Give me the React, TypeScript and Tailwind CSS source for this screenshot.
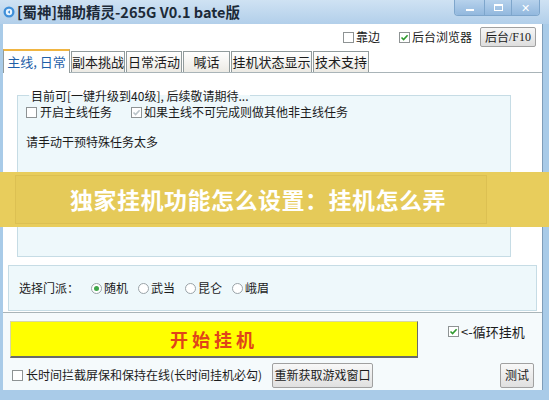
import React from 'react';

function Check({ checked, dim }: { checked?: boolean; dim?: boolean }) {
  return (
    <span className="w-[11px] h-[11px] shrink-0 border border-[#8e9394] bg-white flex items-center justify-center">
      {checked && (
        <svg width="9" height="9" viewBox="0 0 9 9" fill="none">
          <path d="M1.5 4.5L3.6 6.6L7.6 2.2" stroke={dim ? '#b9c3c8' : '#2f9a2f'} strokeWidth="1.6" />
        </svg>
      )}
    </span>
  );
}

function Radio({ on }: { on?: boolean }) {
  return (
    <span className="w-[11px] h-[11px] shrink-0 rounded-full border border-[#9aa3a8] bg-white flex items-center justify-center">
      {on && <span className="w-[5px] h-[5px] rounded-full bg-[#3fa64a]" />}
    </span>
  );
}

const tabs = [
  { label: '主线, 日常', w: 'w-[67px]', active: true },
  { label: '副本挑战', w: 'w-[54px]' },
  { label: '日常活动', w: 'w-[56px]' },
  { label: '喊话', w: 'w-[47px]' },
  { label: '挂机状态显示', w: 'w-[81px]' },
  { label: '技术支持', w: 'w-[56px]' },
];

export default function App() {
  return (
    <div className="w-[549px] h-[400px] relative overflow-hidden flex flex-col bg-[#a9cbe8] text-[#1b1b1b] font-['Noto_Sans_CJK_SC','DejaVu_Sans',sans-serif]">
      {/* Title bar */}
      <div className="h-[24px] flex items-start bg-gradient-to-b from-[#cfe2f3] to-[#b2cfea]">
        <div className="flex items-center h-[24px] pl-[3px] gap-[2px]">
          <svg width="12" height="12" viewBox="0 0 12 12">
            <circle cx="6" cy="6" r="5.5" fill="#3f8fd8" />
            <circle cx="6" cy="6" r="3.2" fill="#e9f4ff" />
            <path d="M4.6 6L7 4.2V7.8Z" fill="#3f8fd8" />
          </svg>
          <span className="text-[14.5px] font-bold text-[#1c2a38]">[蜀神]辅助精灵-265G V0.1 bate版</span>
        </div>
        <div className="ml-auto mr-[9px] flex h-[16px] rounded-b-[4px] overflow-hidden border border-t-0 border-[#7ea6cc]">
          <div className="w-[30px] flex items-center justify-center bg-gradient-to-b from-[#b7d2ec] to-[#92b8de] border-r border-[#7ea6cc]">
            <span className="w-[8px] h-[2px] bg-white mt-[5px]" />
          </div>
          <div className="w-[27px] flex items-center justify-center bg-gradient-to-b from-[#b7d2ec] to-[#92b8de] border-r border-[#7ea6cc]">
            <span className="w-[9px] h-[7px] border border-white border-t-2" />
          </div>
          <div className="w-[27px] flex items-center justify-center bg-gradient-to-b from-[#b7d2ec] to-[#92b8de] text-white text-[11px] font-bold leading-none">
            ✕
          </div>
        </div>
      </div>

      {/* Client area */}
      <div className="flex-1 ml-[3px] mr-[6px] mb-[10px] bg-white flex flex-col border-r border-[#7f9db9]">
        {/* Top row */}
        <div className="h-[26px] flex items-center justify-end pr-[6px] text-[12px]">
          <Check />
          <span className="ml-[2px]">靠边</span>
          <span className="ml-[19px]"><Check checked /></span>
          <span className="ml-[2px]">后台浏览器</span>
          <button className="ml-[8px] w-[56px] h-[20px] border border-[#a0a0a0] rounded-[2px] bg-gradient-to-b from-[#f6f6f6] to-[#dedede] text-[12px] flex items-center justify-center">
            后台<span className="font-['Liberation_Serif',serif] text-[12px]">/F10</span>
          </button>
        </div>

        {/* Tabs */}
        <div className="h-[22px] flex items-end gap-[1px]">
          {tabs.map(t => (
            <div
              key={t.label}
              className={`${t.w} flex items-center justify-center text-[13px] border border-b-0 ${
                t.active
                  ? 'h-[24px] bg-white border-[#919b9c] border-t-2 border-t-[#f0b542] text-[#1f5fa8] relative -mb-px z-10'
                  : 'h-[21px] bg-gradient-to-b from-white to-[#eceae4] border-[#919b9c]'
              }`}
            >
              {t.label}
            </div>
          ))}
        </div>

        {/* Tab panel */}
        <div className="h-[241px] border-t border-b border-[#a9b4b8] flex flex-col text-[12px]">
          <fieldset className="ml-[14px] mt-[15px] w-[494px] h-[169px] border border-[#c6dce5] bg-[#eef8fb] px-[8px]">
            <legend className="ml-[3px] px-[2px] text-[12px] leading-[15px]">目前可[一键升级到40级], 后续敬请期待...</legend>
            <div className="flex items-center mt-[2px] h-[14px]">
              <Check />
              <span className="ml-[3px]">开启主线任务</span>
              <span className="ml-[19px]"><Check checked dim /></span>
              <span className="ml-[2px]">如果主线不可完成则做其他非主线任务</span>
            </div>
            <div className="mt-[15px] leading-[16px]">请手动干预特殊任务太多</div>
          </fieldset>
          <div className="mx-[5px] mt-[8px] h-[46px] border border-[#c6dce5] bg-[#eef8fb] flex items-center pl-[10px]">
            <span className="w-[72px]">选择门派：</span>
            <Radio on />
            <span className="ml-[2px] w-[34px]">随机</span>
            <Radio />
            <span className="ml-[2px] w-[34px]">武当</span>
            <Radio />
            <span className="ml-[2px] w-[34px]">昆仑</span>
            <Radio />
            <span className="ml-[2px]">峨眉</span>
          </div>
        </div>

        {/* Bottom area */}
        <div className="flex-1 bg-[#f5fafc] flex flex-col pl-[7px] text-[12px]">
          <div className="flex items-start mt-[8px]">
            <button className="w-[408px] h-[37px] bg-[#ffff00] border border-[#d8d8a0] border-r-[#6a6a6a] border-b-2 border-b-[#6a6a6a] text-[#e0441a] text-[18px] font-bold tracking-[4px] flex items-center justify-center">
              开始挂机
            </button>
            <div className="ml-[30px] mt-[1px] flex items-center">
              <Check checked />
              <span className="ml-[2px] text-[13px]">{'<-循环挂机'}</span>
            </div>
          </div>
          <div className="flex items-center mt-[4px] h-[26px] pr-[8px]">
            <span className="ml-[2px]"><Check /></span>
            <span className="ml-[3px] text-[12px]">长时间拦截屏保和保持在线(长时间挂机必勾)</span>
            <button className="ml-[10px] w-[101px] h-[25px] border border-[#a0a0a0] rounded-[2px] bg-gradient-to-b from-[#f8f8f8] to-[#e0e0e0] text-[12px]">
              重新获取游戏窗口
            </button>
            <button className="ml-auto w-[34px] h-[25px] border border-[#a0a0a0] rounded-[2px] bg-gradient-to-b from-[#f8f8f8] to-[#e0e0e0] text-[12px]">
              测试
            </button>
          </div>
        </div>
      </div>

      {/* Overlay banner */}
      <div className="absolute left-0 top-[172px] w-full h-[55px] bg-[#e8cd5c] flex items-center">
        <div className="ml-[15px] w-[472px] h-[49px] border border-[#dcc052] bg-[#e5ca59] flex items-center justify-center pl-[14px]">
          <span className="text-white font-bold text-[23px] leading-none tracking-[0.5px]">独家挂机功能怎么设置：挂机怎么弄</span>
        </div>
      </div>
    </div>
  );
}
